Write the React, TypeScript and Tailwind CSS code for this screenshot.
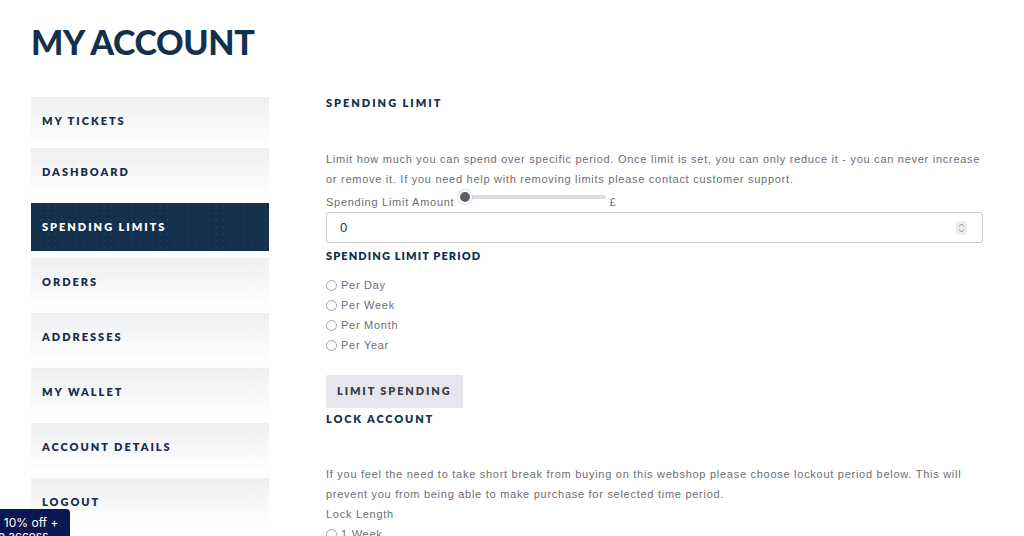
import React from "react";

const navItems = [
  "MY TICKETS",
  "DASHBOARD",
  "SPENDING LIMITS",
  "ORDERS",
  "ADDRESSES",
  "MY WALLET",
  "ACCOUNT DETAILS",
  "LOGOUT",
];

const sans = "font-['Liberation_Sans',Arial,sans-serif]";
const display = "font-['Lato','Inter',sans-serif]";

function Heading({ children, className = "" }: { children: React.ReactNode; className?: string }) {
  return (
    <h2 className={`${display} text-[11px] leading-[14px] font-extrabold text-[#13304d] ${className}`}>
      {children}
    </h2>
  );
}

function Radio({ label }: { label: string }) {
  return (
    <label className="flex items-center gap-[4px] h-5">
      <span className="w-[11px] h-[11px] rounded-full border border-[#a3a3aa] bg-white shrink-0" />
      <span>{label}</span>
    </label>
  );
}

export default function App() {
  return (
    <div className="relative w-[1024px] h-[536px] overflow-hidden bg-white">
      <div className="px-[31px] pt-[23px]">
        <h1 className={`${display} text-[34px] leading-[38px] font-black tracking-[-0.01em] text-[#13304d]`}>
          MY ACCOUNT
        </h1>

        <div className="flex gap-[57px] mt-[36px]">
          <nav className="w-[238px] shrink-0 flex flex-col gap-[7px]">
            {navItems.map((item, i) => {
              const active = item === "SPENDING LIMITS";
              return (
                <div
                  key={item}
                  className={`h-12 flex items-center pl-[11px] ${display} text-[11px] font-extrabold tracking-[0.18em] ${
                    i === 0 ? "-mb-[4px]" : ""
                  } ${
                    active
                      ? "bg-[#13304d] text-white bg-[radial-gradient(#1f3c5a_1px,transparent_1px)] bg-[length:7px_7px]"
                      : "bg-linear-to-b from-[#eeeff1] to-white text-[#1b2d4a]"
                  }`}
                >
                  {item}
                </div>
              );
            })}
          </nav>

          <main className={`w-[657px] ${sans} text-[11px] tracking-[0.066em] text-[#6d6e76]`}>
            <Heading className="-mt-[1px] tracking-[0.18em]">SPENDING LIMIT</Heading>
            <p className="mt-[39px] leading-5">
              Limit how much you can spend over specific period. Once limit is set, you can only reduce it - you can
              never increase or remove it. If you need help with removing limits please contact customer support.
            </p>
            <div className="flex items-end mt-[3px] h-5">
              <span className="leading-5">Spending Limit Amount</span>
              <div className="relative w-[148px] h-[14px] ml-[4px] mb-[8px]">
                <div className="absolute left-[6px] right-0 top-[5px] h-[4px] rounded-full bg-[#dcdce2]" />
                <div className="absolute left-0 top-0 w-[14px] h-[14px] rounded-full bg-[#5a5c66] border-2 border-white shadow-[0_0_2px_rgba(0,0,0,0.35)]" />
              </div>
              <span className="leading-5 ml-[3px]">£</span>
            </div>
            <div className="h-[31px] border border-[#c9c9cf] rounded-[3px] flex items-center justify-between pl-[13px] pr-[15px] text-[13px] text-[#2f2f35]">
              <span>0</span>
              <span className="w-[11px] h-[14px] bg-[#ececf0] rounded-[2px] flex items-center justify-center">
                <svg width="7" height="10" viewBox="0 0 7 10" fill="none" stroke="#8a8a92" strokeWidth="1">
                  <path d="M1 3.5 L3.5 1 L6 3.5" />
                  <path d="M1 6.5 L3.5 9 L6 6.5" />
                </svg>
              </span>
            </div>

            <Heading className="mt-[6px] tracking-[0.1em]">SPENDING LIMIT PERIOD</Heading>
            <div className="mt-[12px] flex flex-col">
              <Radio label="Per Day" />
              <Radio label="Per Week" />
              <Radio label="Per Month" />
              <Radio label="Per Year" />
            </div>

            <button
              className={`mt-[20px] h-[33px] px-[11px] rounded-[2px] bg-[#e7e6ec] ${display} text-[11px] font-extrabold tracking-[0.17em] text-[#3c3d46]`}
            >
              LIMIT SPENDING
            </button>

            <Heading className="mt-[4px] tracking-[0.17em]">LOCK ACCOUNT</Heading>
            <p className="mt-[38px] leading-5">
              If you feel the need to take short break from buying on this webshop please choose lockout period below.
              This will prevent you from being able to make purchase for selected time period.
            </p>
            <div className="leading-5">Lock Length</div>
            <Radio label="1 Week" />
          </main>
        </div>
      </div>

      <div className="absolute left-0 bottom-0 w-[70px] h-[27px] bg-[#0c1650] rounded-tr-[4px] overflow-hidden font-['Inter',sans-serif] text-[12px] leading-[13px] text-white pt-[7px]">
        <div className="-ml-[3px] whitespace-nowrap">: 10% off +</div>
        <div className="-ml-[2px] whitespace-nowrap">e access</div>
      </div>
    </div>
  );
}
